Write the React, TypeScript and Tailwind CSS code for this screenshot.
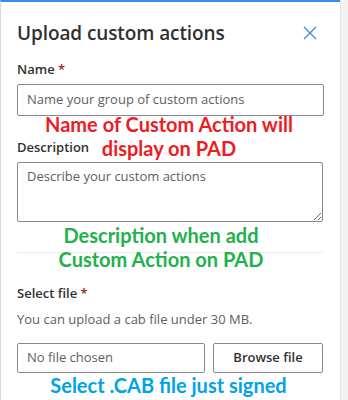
import React from "react";

export default function App() {
  return (
    <div className="relative w-[348px] h-[400px] bg-white overflow-hidden flex font-['Open_Sans',sans-serif] text-[#323130]">
      <div className="w-[340px] h-full border-t-[2px] border-t-[#3b8beb] border-l border-l-[#d9d9d9] pl-[16px] pr-[16px] pt-[17px] flex flex-col">
        <div className="flex items-center justify-between h-[28px]">
          <div className="text-[19px] font-semibold leading-[28px] tracking-[-0.1px]">Upload custom actions</div>
          <svg width="16" height="16" viewBox="0 0 16 16" className="mr-[6px]">
            <path d="M2 2 L14 14 M14 2 L2 14" stroke="#3b86e6" strokeWidth="1.3" fill="none" />
          </svg>
        </div>
        <div className="mt-[12px] text-[13px] font-semibold leading-[20px]">
          Name <span className="text-[#a4262c]">*</span>
        </div>
        <div className="mt-[5px] h-[32px] w-[307px] border border-[#8a8886] rounded-[2px] flex items-center pl-[9px] text-[13px] text-[#605e5c]">
          Name your group of custom actions
        </div>
        <div className="mt-[21px] text-[13px] font-semibold leading-[20px]">Description</div>
        <textarea
          className="mt-[5px] h-[60px] w-[306px] border border-[#8a8886] rounded-[2px] px-[9px] py-[4px] text-[13px] text-[#323130] placeholder:text-[#605e5c] resize-y outline-none font-['Open_Sans',sans-serif]"
          placeholder="Describe your custom actions"
        />
        <div className="mt-[30px] w-[306px] h-px bg-[#edebe9]" />
        <div className="mt-[30px] text-[13px] font-semibold leading-[20px]">
          Select file <span className="text-[#a4262c]">*</span>
        </div>
        <div className="mt-[6px] text-[13px] leading-[20px] text-[#605e5c]">You can upload a cab file under 30 MB.</div>
        <div className="mt-[14px] flex gap-[8px]">
          <div className="h-[30px] w-[188px] border border-[#8a8886] rounded-[2px] flex items-center pl-[9px] text-[13px] text-[#605e5c]">
            No file chosen
          </div>
          <div className="h-[30px] w-[110px] border border-[#8a8886] rounded-[2px] flex items-center justify-center text-[13px] font-semibold">
            Browse file
          </div>
        </div>
      </div>
      <div className="flex-1 bg-[#f2f2f2] border-l border-l-[#e6e6e6]" />

      <div className="absolute left-0 top-[112px] w-[338px] text-center font-['Lato',sans-serif] font-bold text-[20px] leading-[24px] text-[#ed1c24]">
        Name of Custom Action will
        <br />
        display on PAD
      </div>
      <div className="absolute left-0 top-[223px] w-[322px] text-center font-['Lato',sans-serif] font-bold text-[20px] leading-[24px] text-[#22b14c]">
        Description when add
        <br />
        Custom Action on PAD
      </div>
      <div className="absolute left-0 top-[373px] w-[337px] text-center font-['Lato',sans-serif] font-bold text-[20px] leading-[24px] text-[#00a2e8]">
        Select .CAB file just signed
      </div>
    </div>
  );
}
